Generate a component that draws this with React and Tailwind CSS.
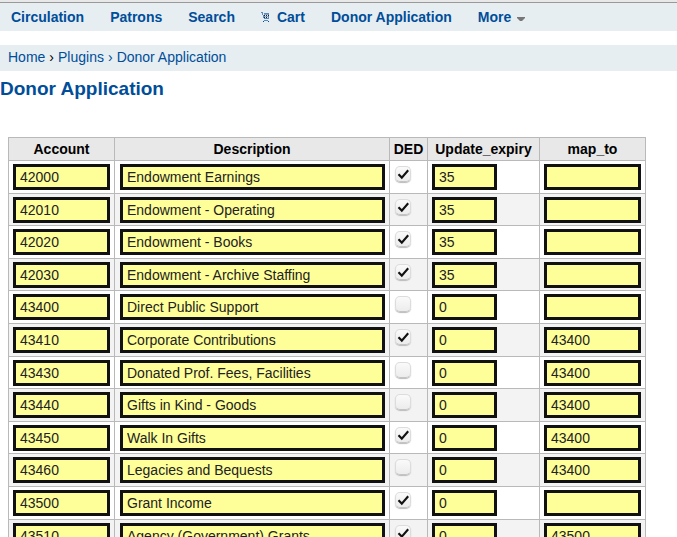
import React from "react";

const columns = ["Account", "Description", "DED", "Update_expiry", "map_to"];

const accounts = [
  { account: "42000", description: "Endowment Earnings", ded: true, expiry: "35", mapTo: "" },
  { account: "42010", description: "Endowment - Operating", ded: true, expiry: "35", mapTo: "" },
  { account: "42020", description: "Endowment - Books", ded: true, expiry: "35", mapTo: "" },
  { account: "42030", description: "Endowment - Archive Staffing", ded: true, expiry: "35", mapTo: "" },
  { account: "43400", description: "Direct Public Support", ded: false, expiry: "0", mapTo: "" },
  { account: "43410", description: "Corporate Contributions", ded: true, expiry: "0", mapTo: "43400" },
  { account: "43430", description: "Donated Prof. Fees, Facilities", ded: false, expiry: "0", mapTo: "43400" },
  { account: "43440", description: "Gifts in Kind - Goods", ded: false, expiry: "0", mapTo: "43400" },
  { account: "43450", description: "Walk In Gifts", ded: true, expiry: "0", mapTo: "43400" },
  { account: "43460", description: "Legacies and Bequests", ded: false, expiry: "0", mapTo: "43400" },
  { account: "43500", description: "Grant Income", ded: true, expiry: "0", mapTo: "" },
  { account: "43510", description: "Agency (Government) Grants", ded: true, expiry: "0", mapTo: "43500" },
];

function CartIcon() {
  return (
    <svg width="10" height="10" viewBox="0 0 10 10" aria-hidden="true" shapeRendering="crispEdges">
      <path d="M0 0.5h2M1.5 1v2M2.5 3v3M3 6.5h5M7.5 1v5M3 1.5h5M3 8.5h4" stroke="#5a8cc0" strokeWidth="1" fill="none" />
      <path d="M3 2.5h4M3 4.5h4" stroke="#7da5cf" strokeWidth="1" />
      <path d="M3 3.5h5M3 5.5h4" stroke="#222" strokeWidth="1" strokeDasharray="1 1" />
      <path d="M2 9.5h1M7 9.5h1" stroke="#004d99" strokeWidth="1" />
    </svg>
  );
}

function NavLink({ children }) {
  return (
    <a href="#" className="flex items-center gap-1.5 hover:underline">
      {children}
    </a>
  );
}

function TextField({ label, value, width }) {
  return (
    <input
      type="text"
      aria-label={label}
      defaultValue={value}
      className={`block h-[26px] border-3 border-[#111] bg-[#ffff99] px-1 text-[14px] leading-5 text-[#222] outline-none ${width}`}
    />
  );
}

function CheckField({ label, checked }) {
  return (
    <label className="mt-0.5 ml-px grid size-4">
      <input
        type="checkbox"
        aria-label={label}
        defaultChecked={checked}
        className="peer col-start-1 row-start-1 size-4 appearance-none rounded-[5px] border border-[#dcdcdc] border-b-[#c4c4c4] bg-linear-to-b from-[#fafafa] to-[#ececec] shadow-[0_1px_1px_#bbb]"
      />
      <svg viewBox="0 0 16 16" className="pointer-events-none col-start-1 row-start-1 hidden size-4 peer-checked:block" aria-hidden="true">
        <path d="M3.5 8.2L6.8 11.6L13.2 4.2" fill="none" stroke="#111" strokeWidth="2.1" />
      </svg>
    </label>
  );
}

const cell = "border-r border-b border-[#b9b9b9] pt-[3px] pl-1 align-top";

export default function App() {
  return (
    <div className="h-screen overflow-hidden bg-white font-['Liberation_Sans',Arial,sans-serif] text-[14px] text-black">
      <div className="h-[3px] border-b border-[#999] bg-[#e8e8e8]" />
      <nav className="flex h-7 items-center gap-[26px] bg-[#e6eef1] pl-[11px] font-bold text-[#004d99]">
        <NavLink>Circulation</NavLink>
        <NavLink>Patrons</NavLink>
        <NavLink>Search</NavLink>
        <NavLink>
          <CartIcon />
          Cart
        </NavLink>
        <NavLink>Donor Application</NavLink>
        <NavLink>
          More
          <svg width="8" height="4" viewBox="0 0 8 4" className="mt-1" aria-hidden="true">
            <path d="M0 0h8v1L5 4H3L0 1z" fill="#777" />
          </svg>
        </NavLink>
      </nav>
      <div className="mt-3.5 flex h-[26px] items-center gap-1 bg-[#e6eef1] pb-0.5 pl-2 text-[#004d99]">
        <a href="#">Home</a>
        <span className="text-black">›</span>
        <a href="#">Plugins</a>
        <span>›</span>
        <a href="#">Donor Application</a>
      </div>
      <h1 className="mt-1.5 text-[19px] leading-6 font-bold text-[#004d99]">Donor Application</h1>
      <table className="mt-9 ml-2 w-[638px] table-fixed border-separate border-spacing-0 border-t border-l border-[#b9b9b9]">
        <colgroup>
          <col className="w-[106px]" />
          <col className="w-[275px]" />
          <col className="w-[38px]" />
          <col className="w-[112px]" />
          <col className="w-[106px]" />
        </colgroup>
        <thead>
          <tr className="h-[23px] bg-[#e8e8e8]">
            {columns.map((name) => (
              <th key={name} className="border-r border-b border-[#b9b9b9] p-0 leading-5 font-bold">
                {name}
              </th>
            ))}
          </tr>
        </thead>
        <tbody>
          {accounts.map((row) => (
            <tr
              key={row.account}
              className="h-[33px] even:bg-[#f3f3f3] nth-[5n+2]:h-8 nth-[5n+4]:h-8"
            >
              <td className={cell}>
                <TextField label="Account" value={row.account} width="w-[97px]" />
              </td>
              <td className={`${cell} pl-[5px]`}>
                <TextField label="Description" value={row.description} width="w-[265px]" />
              </td>
              <td className={cell}>
                <CheckField label="DED" checked={row.ded} />
              </td>
              <td className={cell}>
                <TextField label="Update_expiry" value={row.expiry} width="w-[65px]" />
              </td>
              <td className={cell}>
                <TextField label="map_to" value={row.mapTo} width="w-[97px]" />
              </td>
            </tr>
          ))}
        </tbody>
      </table>
    </div>
  );
}
